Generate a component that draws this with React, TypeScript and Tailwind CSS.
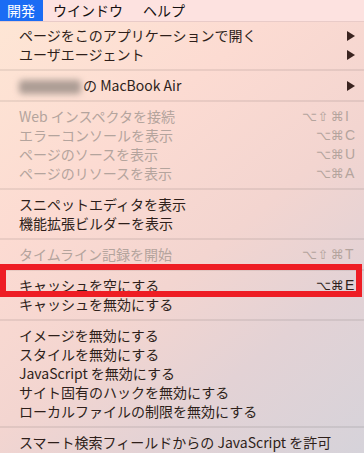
import React from 'react';

type MenuItem =
  | { kind: 'sep' }
  | {
      kind: 'item';
      label: React.ReactNode;
      mods?: string[];
      keyChar?: string;
      disabled?: boolean;
      submenu?: boolean;
    };

const sep: MenuItem = { kind: 'sep' };

const items: MenuItem[] = [
  { kind: 'item', label: 'ページをこのアプリケーションで開く', submenu: true },
  { kind: 'item', label: 'ユーザエージェント', submenu: true },
  sep,
  {
    kind: 'item',
    label: (
      <>
        <span className="inline-block w-[62px] h-[14px] mr-[2px] align-middle rounded-sm bg-[#ad9d95] blur-[3px]" />
        の MacBook Air
      </>
    ),
    submenu: true,
  },
  sep,
  { kind: 'item', label: 'Web インスペクタを接続', mods: ['⌥', '⇧', '⌘'], keyChar: 'I', disabled: true },
  { kind: 'item', label: 'エラーコンソールを表示', mods: ['⌥', '⌘'], keyChar: 'C', disabled: true },
  { kind: 'item', label: 'ページのソースを表示', mods: ['⌥', '⌘'], keyChar: 'U', disabled: true },
  { kind: 'item', label: 'ページのリソースを表示', mods: ['⌥', '⌘'], keyChar: 'A', disabled: true },
  sep,
  { kind: 'item', label: 'スニペットエディタを表示' },
  { kind: 'item', label: '機能拡張ビルダーを表示' },
  sep,
  { kind: 'item', label: 'タイムライン記録を開始', mods: ['⌥', '⇧', '⌘'], keyChar: 'T', disabled: true },
  sep,
  { kind: 'item', label: 'キャッシュを空にする', mods: ['⌥', '⌘'], keyChar: 'E' },
  { kind: 'item', label: 'キャッシュを無効にする' },
  sep,
  { kind: 'item', label: 'イメージを無効にする' },
  { kind: 'item', label: 'スタイルを無効にする' },
  { kind: 'item', label: 'JavaScript を無効にする' },
  { kind: 'item', label: 'サイト固有のハックを無効にする' },
  { kind: 'item', label: 'ローカルファイルの制限を無効にする' },
  sep,
  { kind: 'item', label: 'スマート検索フィールドからの JavaScript を許可' },
];

const Arrow = () => (
  <svg width="8" height="10" viewBox="0 0 8 10" className="ml-auto">
    <polygon points="0,0 8,5 0,10" fill="#3a2420" />
  </svg>
);

const Row = ({ item }: { item: Extract<MenuItem, { kind: 'item' }> }) => (
  <div
    className={`flex items-center h-[19px] pl-[19px] leading-[19px] ${
      item.submenu ? 'pr-[9px]' : 'pr-[6px]'
    } ${item.disabled ? 'text-[#b4a49d]' : 'text-[#2e1f1a]'}`}
  >
    <span className="whitespace-nowrap">{item.label}</span>
    {item.submenu && <Arrow />}
    {item.keyChar && (
      <span className="ml-auto flex items-center">
        {item.mods?.map((m, i) => (
          <span
            key={i}
            className="inline-block w-[14px] text-center font-['DejaVu_Sans',sans-serif] text-[13px]"
          >
            {m}
          </span>
        ))}
        <span className="inline-block w-[13px] ml-[1px] font-['Liberation_Sans',sans-serif]">
          {item.keyChar}
        </span>
      </span>
    )}
  </div>
);

export default function App() {
  return (
    <div className="relative w-[364px] h-[453px] overflow-hidden font-['Noto_Sans_CJK_JP','Liberation_Sans',sans-serif] text-[14px]">
      {/* menu bar */}
      <div className="flex h-[22px] items-stretch bg-[#fde2e0] border-b border-[#e9cbc8] leading-[21px]">
        <div className="pl-[7px] pr-[8px] bg-[#1a6cf4] text-white">開発</div>
        <div className="px-[10px] text-[#141010]">ウインドウ</div>
        <div className="px-[10px] text-[#141010]">ヘルプ</div>
      </div>

      {/* dropdown */}
      <div className="pt-[4px] h-[431px] bg-[linear-gradient(140deg,#fee6d5_0%,#fcdbd2_30%,#f3d5d0_55%,#e3d2d5_75%,#d6d3da_100%)]">
        {items.map((item, i) =>
          item.kind === 'sep' ? (
            <div key={i} className="h-[12px] flex items-center">
              <div className="w-full h-[2px] bg-black/[0.07]" />
            </div>
          ) : (
            <Row key={i} item={item} />
          )
        )}
      </div>

      {/* annotation box */}
      <div className="absolute left-0 top-[264px] w-[362px] h-[33px] border-[6px] border-[#ee1d24]" />
    </div>
  );
}
